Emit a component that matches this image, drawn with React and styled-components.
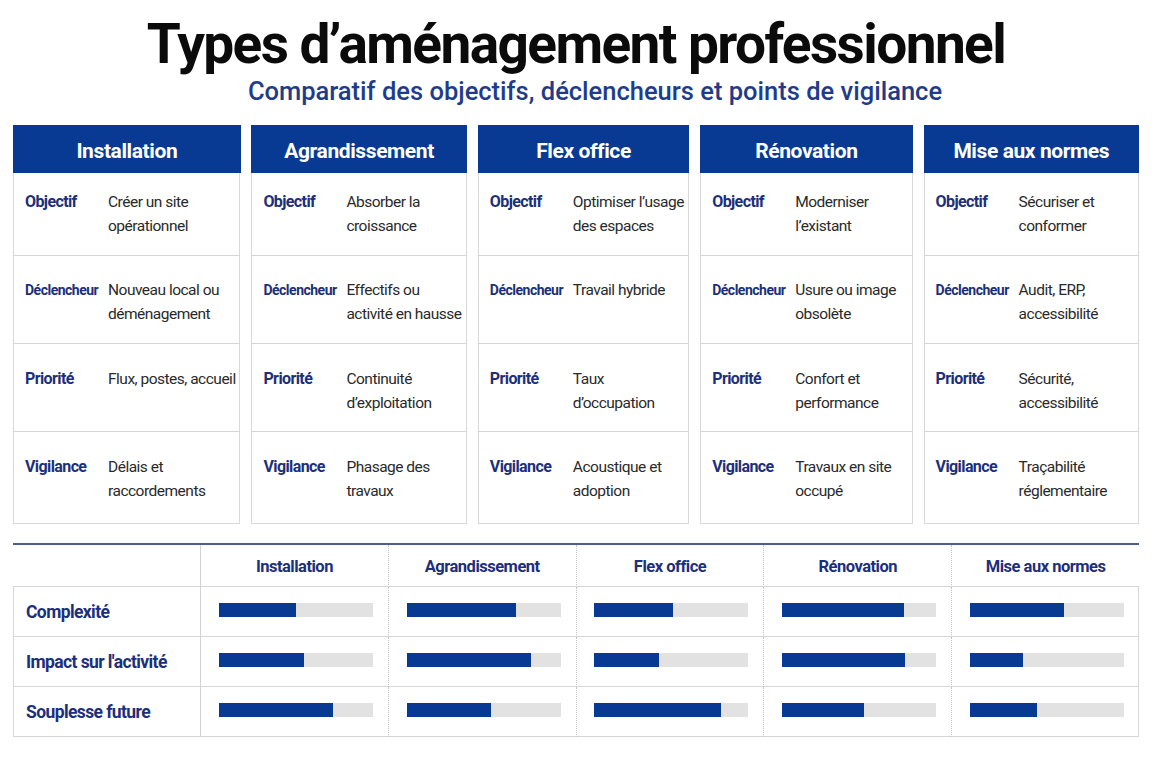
import React from 'react'
import styled, { createGlobalStyle } from 'styled-components'

const SANS = `Roboto, "Liberation Sans", sans-serif`
const BLUE = '#083a93'
const INK = '#1c2f7c'

const GlobalStyle = createGlobalStyle`
    body {
        margin: 0;
        background: #ffffff;
        font-family: ${SANS};
    }
`

//#region styled components

const Page = styled.div`
    width: 1152px;
    box-sizing: border-box;
    padding: 14px 13px 0;
`

const Title = styled.h1`
    margin: 0;
    text-align: center;
    font-weight: 700;
    font-size: 55px;
    line-height: 60px;
    letter-spacing: -1.6px;
    color: #0b0b0b;
`

const Subtitle = styled.h2`
    margin: 2px 0 0;
    padding-left: 38px;
    text-align: center;
    font-weight: 500;
    font-size: 25.5px;
    line-height: 30px;
    color: #1f3c8c;
`

const CardGrid = styled.div`
    display: grid;
    grid-template-columns:
        minmax(0, 227fr) minmax(0, 215fr) minmax(0, 211fr)
        minmax(0, 212fr) minmax(0, 215fr);
    column-gap: 11px;
    margin-top: 19px;
`

const Card = styled.div`
    display: grid;
    grid-template-rows: 48px 82px 88px 88px 92px;
    border: 1px solid #d8d8d8;
    border-top: none;
    background: #fff;
`

const CardHeader = styled.div`
    display: flex;
    align-items: center;
    justify-content: center;
    margin: 0 -1px;
    padding-top: 3px;
    background: ${BLUE};
    color: #fff;
    font-weight: 700;
    font-size: 21px;
    letter-spacing: -0.4px;
`

const Row = styled.div`
    display: grid;
    grid-template-columns: 72px 1fr;
    column-gap: 11px;
    align-content: start;
    padding: ${p => p.$top}px 4px 0 11px;
    border-top: ${p => (p.$first ? 'none' : '1px solid #d5d5d5')};
`

const Label = styled.div`
    font-weight: 700;
    font-size: ${p => (p.$small ? '14px' : '16px')};
    letter-spacing: ${p => (p.$small ? '-0.5px' : '-0.6px')};
    line-height: 24px;
    color: ${INK};
    white-space: nowrap;
`

const Value = styled.div`
    font-size: 15.5px;
    letter-spacing: -0.5px;
    line-height: 24px;
    color: #2a2a2a;
    white-space: pre;
`

const Table = styled.div`
    display: grid;
    grid-template-columns: 187px repeat(5, minmax(0, 1fr));
    grid-template-rows: 42px repeat(3, 50px);
    margin-top: 19px;
    border-top: 2px solid #4b5e8e;
`

const Corner = styled.div`
    border-bottom: 1px solid #d6d6d6;
`

const HeadCell = styled.div`
    display: flex;
    align-items: center;
    justify-content: center;
    padding-top: 2px;
    font-weight: 700;
    font-size: 16.5px;
    letter-spacing: -0.5px;
    color: ${INK};
    border-bottom: 1px solid #d6d6d6;
    border-left: 1px ${p => (p.$solid ? 'solid #d2d2d2' : 'dotted #c4c4c4')};
`

const RowLabel = styled.div`
    display: flex;
    align-items: center;
    padding-left: 12px;
    font-weight: 700;
    font-size: 17.5px;
    letter-spacing: -0.6px;
    white-space: nowrap;
    color: ${INK};
    border-left: 1px solid #d6d6d6;
    border-bottom: 1px solid #d6d6d6;
`

const BarCell = styled.div`
    display: flex;
    align-items: center;
    justify-content: center;
    padding: 0 0 3px 3px;
    border-bottom: 1px solid #d6d6d6;
    border-left: 1px ${p => (p.$solid ? 'solid #d2d2d2' : 'dotted #c4c4c4')};
    border-right: ${p => (p.$last ? '1px solid #d6d6d6' : 'none')};
`

const Track = styled.div`
    width: 154px;
    height: 14px;
    background: #e2e2e2;
`

const Fill = styled.div`
    height: 100%;
    background: ${BLUE};
`

//#endregion

const labels = ['Objectif', 'Déclencheur', 'Priorité', 'Vigilance']
const rowTops = [17, 22, 23, 23]

const types = [
    {
        name: 'Installation',
        rows: ['Créer un site\nopérationnel', 'Nouveau local ou\ndéménagement', 'Flux, postes, accueil', 'Délais et\nraccordements'],
    },
    {
        name: 'Agrandissement',
        rows: ['Absorber la\ncroissance', 'Effectifs ou\nactivité en hausse', 'Continuité\nd’exploitation', 'Phasage des\ntravaux'],
    },
    {
        name: 'Flex office',
        rows: ['Optimiser l’usage\ndes espaces', 'Travail hybride', 'Taux\nd’occupation', 'Acoustique et\nadoption'],
    },
    {
        name: 'Rénovation',
        rows: ['Moderniser\nl’existant', 'Usure ou image\nobsolète', 'Confort et\nperformance', 'Travaux en site\noccupé'],
    },
    {
        name: 'Mise aux normes',
        rows: ['Sécuriser et\nconformer', 'Audit, ERP,\naccessibilité', 'Sécurité,\naccessibilité', 'Traçabilité\nréglementaire'],
    },
]

const scores = [
    { label: 'Complexité', values: [50, 71, 51, 79, 61] },
    { label: 'Impact sur l\'activité', values: [55, 81, 42, 80, 35] },
    { label: 'Souplesse future', values: [74, 55, 82, 53, 44] },
]

function TypeCard({ type }) {
    return (
        <Card>
            <CardHeader>{type.name}</CardHeader>
            {type.rows.map((text, i) => (
                <Row key={i} $top={rowTops[i]} $first={i === 0}>
                    <Label $small={i === 1}>{labels[i]}</Label>
                    <Value>{text}</Value>
                </Row>
            ))}
        </Card>
    )
}

function App() {
    return (
        <>
            <GlobalStyle />
            <Page>
                <Title>Types d’aménagement professionnel</Title>
                <Subtitle>Comparatif des objectifs, déclencheurs et points de vigilance</Subtitle>

                <CardGrid>
                    {types.map(type => <TypeCard key={type.name} type={type} />)}
                </CardGrid>

                <Table>
                    <Corner />
                    {types.map((type, i) => (
                        <HeadCell key={type.name} $solid={i === 0}>{type.name}</HeadCell>
                    ))}
                    {scores.map(score => (
                        <React.Fragment key={score.label}>
                            <RowLabel>{score.label}</RowLabel>
                            {score.values.map((v, i) => (
                                <BarCell key={i} $solid={i === 0} $last={i === 4}>
                                    <Track>
                                        <Fill style={{ width: `${v}%` }} />
                                    </Track>
                                </BarCell>
                            ))}
                        </React.Fragment>
                    ))}
                </Table>
            </Page>
        </>
    )
}

export default App
